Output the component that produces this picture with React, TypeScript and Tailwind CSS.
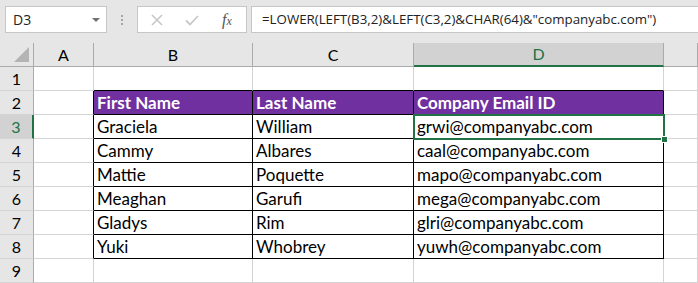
import React from "react";

const cols = [
  { key: "A", w: 60 },
  { key: "B", w: 159 },
  { key: "C", w: 161 },
  { key: "D", w: 250 },
  { key: "E", w: 0 },
];

const data: string[][] = [
  ["Graciela", "William", "grwi@companyabc.com"],
  ["Cammy", "Albares", "caal@companyabc.com"],
  ["Mattie", "Poquette", "mapo@companyabc.com"],
  ["Meaghan", "Garufi", "mega@companyabc.com"],
  ["Gladys", "Rim", "glri@companyabc.com"],
  ["Yuki", "Whobrey", "yuwh@companyabc.com"],
];

function cellContent(row: number, col: number): string {
  if (row === 2) {
    return ["", "First Name", "Last Name", "Company Email ID", ""][col];
  }
  if (row >= 3 && row <= 8 && col >= 1 && col <= 3) {
    return data[row - 3][col - 1];
  }
  return "";
}

function inTable(row: number, col: number) {
  return row >= 2 && row <= 8 && col >= 1 && col <= 3;
}

export default function App() {
  const rows = [1, 2, 3, 4, 5, 6, 7, 8, 9];
  const font = { fontFamily: "Lato, 'Open Sans', sans-serif" };
  return (
    <div className="w-[698px] h-[283px] overflow-hidden bg-white relative" style={{ fontFamily: "'Open Sans', 'Noto Sans', sans-serif" }}>
      {/* formula bar */}
      <div className="h-[43px] bg-[#e6e6e6] flex items-start pt-[6px]">
        <div className="ml-[5px] w-[102px] h-[27px] bg-white border border-[#c6c6c6] flex items-center justify-between pl-[7px] pr-[6px]">
          <span className="text-[14px] text-[#222]">D3</span>
          <span className="w-0 h-0 border-l-[4px] border-r-[4px] border-t-[4px] border-l-transparent border-r-transparent border-t-[#707070]" />
        </div>
        <div className="w-[30px] h-[27px] flex flex-col items-center justify-center gap-[2px]">
          <span className="w-[2px] h-[2px] bg-[#a6a6a6]" />
          <span className="w-[2px] h-[2px] bg-[#a6a6a6]" />
          <span className="w-[2px] h-[2px] bg-[#a6a6a6]" />
        </div>
        <div className="w-[110px] h-[27px] bg-white border border-[#c6c6c6] flex items-center">
          <svg width="14" height="14" viewBox="0 0 14 14" className="ml-[12px]">
            <path d="M2 2 L12 12 M12 2 L2 12" stroke="#c8c8c8" strokeWidth="1.6" fill="none" />
          </svg>
          <svg width="16" height="14" viewBox="0 0 16 14" className="ml-[20px]">
            <path d="M2 7.5 L6 11.5 L14 3" stroke="#c8c8c8" strokeWidth="1.8" fill="none" />
          </svg>
          <span className="ml-[22px] text-[16px] italic text-[#555] leading-none" style={{ fontFamily: "'Liberation Serif', serif" }}>
            f<span className="text-[12px]">x</span>
          </span>
        </div>
        <div className="ml-[4px] flex-1 h-[27px] bg-white border border-[#c6c6c6] border-r-0 flex items-center pl-[10px]">
          <span className="text-[13.3px] text-[#222] whitespace-nowrap">
            =LOWER(LEFT(B3,2)&amp;LEFT(C3,2)&amp;CHAR(64)&amp;"companyabc.com")
          </span>
        </div>
      </div>

      {/* grid */}
      <div
        className="grid"
        style={{ gridTemplateColumns: "34px 60px 159px 161px 250px 1fr", gridAutoRows: "24px" }}
      >
        <div className="bg-[#e6e6e6] border-r border-b border-[#ababab] relative">
          <div className="absolute right-[4px] bottom-[4px] w-0 h-0 border-l-[15px] border-b-[15px] border-l-transparent border-b-[#b4b4b4]" />
        </div>
        {cols.map((c) => {
          const sel = c.key === "D";
          return (
            <div
              key={c.key}
              className={
                "flex items-center justify-center text-[16px] border-r border-[#ababab] " +
                (sel
                  ? "bg-[#d2d2d2] text-[#217346] border-b-[2px] border-b-[#217346]"
                  : "bg-[#e6e6e6] text-black border-b border-b-[#ababab]")
              }
              style={font}
            >
              {c.key !== "E" ? c.key : ""}
            </div>
          );
        })}
        {rows.map((r) => (
          <React.Fragment key={r}>
            <div
              className={
                "flex items-center justify-center text-[16px] border-b border-[#d4d4d4] " +
                (r === 3
                  ? "bg-[#d2d2d2] text-[#217346] border-r-[2px] border-r-[#217346]"
                  : "bg-[#e6e6e6] text-black border-r border-r-[#ababab]")
              }
              style={font}
            >
              {r}
            </div>
            {cols.map((c, ci) => {
              const t = inTable(r, ci);
              const header = r === 2 && t;
              const rightBlack = t || inTable(r, ci + 1);
              const bottomBlack = t || inTable(r + 1, ci);
              const txt = cellContent(r, ci);
              return (
                <div
                  key={c.key}
                  className={
                    "flex items-end pl-[3px] text-[17px] leading-[22px] whitespace-nowrap overflow-visible border-r border-b " +
                    (rightBlack ? "border-r-black " : "border-r-[#d4d4d4] ") +
                    (bottomBlack ? "border-b-black " : "border-b-[#d4d4d4] ") +
                    (header ? "bg-[#7030a0] text-white font-bold" : "text-black")
                  }
                  style={font}
                >
                  {txt}
                </div>
              );
            })}
          </React.Fragment>
        ))}
      </div>

      {/* selection overlay for D3 */}
      <div className="absolute left-[413px] top-[114px] w-[252px] h-[26px] border-[2px] border-[#217346] pointer-events-none">
        <div className="absolute right-[-5px] bottom-[-5px] w-[7px] h-[7px] bg-[#217346] border border-white" />
      </div>
    </div>
  );
}
